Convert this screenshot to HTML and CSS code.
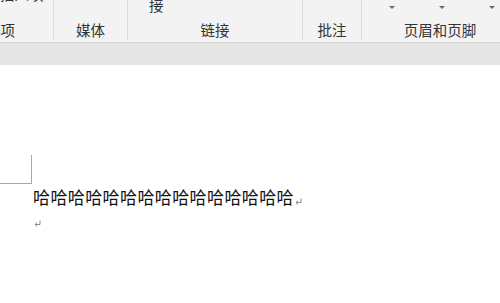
FILE: index.html
```html
<!DOCTYPE html>
<html lang="zh">
<head>
<meta charset="utf-8">
<link rel="stylesheet" href="styles.css">
</head>
<body>
<div class="ribbon">
  <div class="group g1">
    <div class="top-cut">插入项</div>
    <div class="label lab1">选项</div>
  </div>
  <div class="group g2">
    <div class="label">媒体</div>
  </div>
  <div class="group g3">
    <div class="top-char">接</div>
    <div class="label">链接</div>
  </div>
  <div class="group g4">
    <div class="label">批注</div>
  </div>
  <div class="group g5">
    <div class="arrows">
      <span class="arrow"></span>
      <span class="arrow"></span>
      <span class="arrow"></span>
    </div>
    <div class="label">页眉和页脚</div>
  </div>
</div>
<div class="band"></div>
<div class="doc">
  <div class="corner"></div>
  <p class="para first">哈哈哈哈哈哈哈哈哈哈哈哈哈哈哈<svg class="ret" viewBox="0 0 7 7" width="7" height="7"><path d="M6 0.5V4.5H1.2M3 2.6L1 4.5L3 6.4" fill="none" stroke="#8a8a8a" stroke-width="1"/></svg></p>
  <p class="para"><svg class="ret" viewBox="0 0 7 7" width="7" height="7"><path d="M6 0.5V4.5H1.2M3 2.6L1 4.5L3 6.4" fill="none" stroke="#8a8a8a" stroke-width="1"/></svg></p>
</div>
</body>
</html>
```
FILE: styles.css
```css
html, body {
  margin: 0;
  padding: 0;
  background: #ffffff;
  width: 500px;
  height: 303px;
  overflow: hidden;
  font-family: "Noto Sans CJK SC", "Noto Sans", sans-serif;
}

.ribbon {
  display: flex;
  height: 42px;
  background: #f3f3f3;
  border-bottom: 1px solid #d6d6d6;
  overflow: hidden;
}

.group {
  position: relative;
  display: flex;
  flex-direction: column;
  justify-content: flex-end;
  align-items: center;
  height: 40px;
  flex: none;
  border-right: 1px solid #dadada;
}

.g1 { width: 53px; align-items: flex-start; }
.g2 { width: 73px; }
.g3 { width: 174px; }
.g4 { width: 58px; }
.g5 { width: 156px; border-right: none; }

.label {
  font-size: 14.5px;
  line-height: 18px;
  color: #333333;
  margin-bottom: 1px;
  white-space: nowrap;
}

.lab1 {
  margin-left: -14px;
}

.top-cut {
  position: absolute;
  top: -15px;
  left: 0;
  font-size: 14.5px;
  line-height: 18px;
  color: #333333;
}

.top-char {
  position: absolute;
  top: -4px;
  left: 21px;
  font-size: 14.5px;
  line-height: 18px;
  color: #333333;
}

.arrows {
  position: absolute;
  top: 6px;
  left: 27px;
  display: flex;
  gap: 44px;
}

.arrow {
  width: 0;
  height: 0;
  border-left: 3px solid transparent;
  border-right: 3px solid transparent;
  border-top: 3px solid #6a6a6a;
}

.band {
  height: 22px;
  background: #e6e6e6;
}

.doc {
  background: #ffffff;
}

.corner {
  width: 31px;
  height: 28px;
  margin-top: 90px;
  border-right: 1px solid #a8a8a8;
  border-bottom: 1px solid #a8a8a8;
}

.para {
  margin: 0;
  padding-left: 33px;
  font-size: 17px;
  line-height: 22px;
  letter-spacing: 0.4px;
  color: #111111;
  white-space: nowrap;
}

.first {
  margin-top: 2px;
}

.ret {
  vertical-align: -1px;
  margin-left: 1px;
}
```
